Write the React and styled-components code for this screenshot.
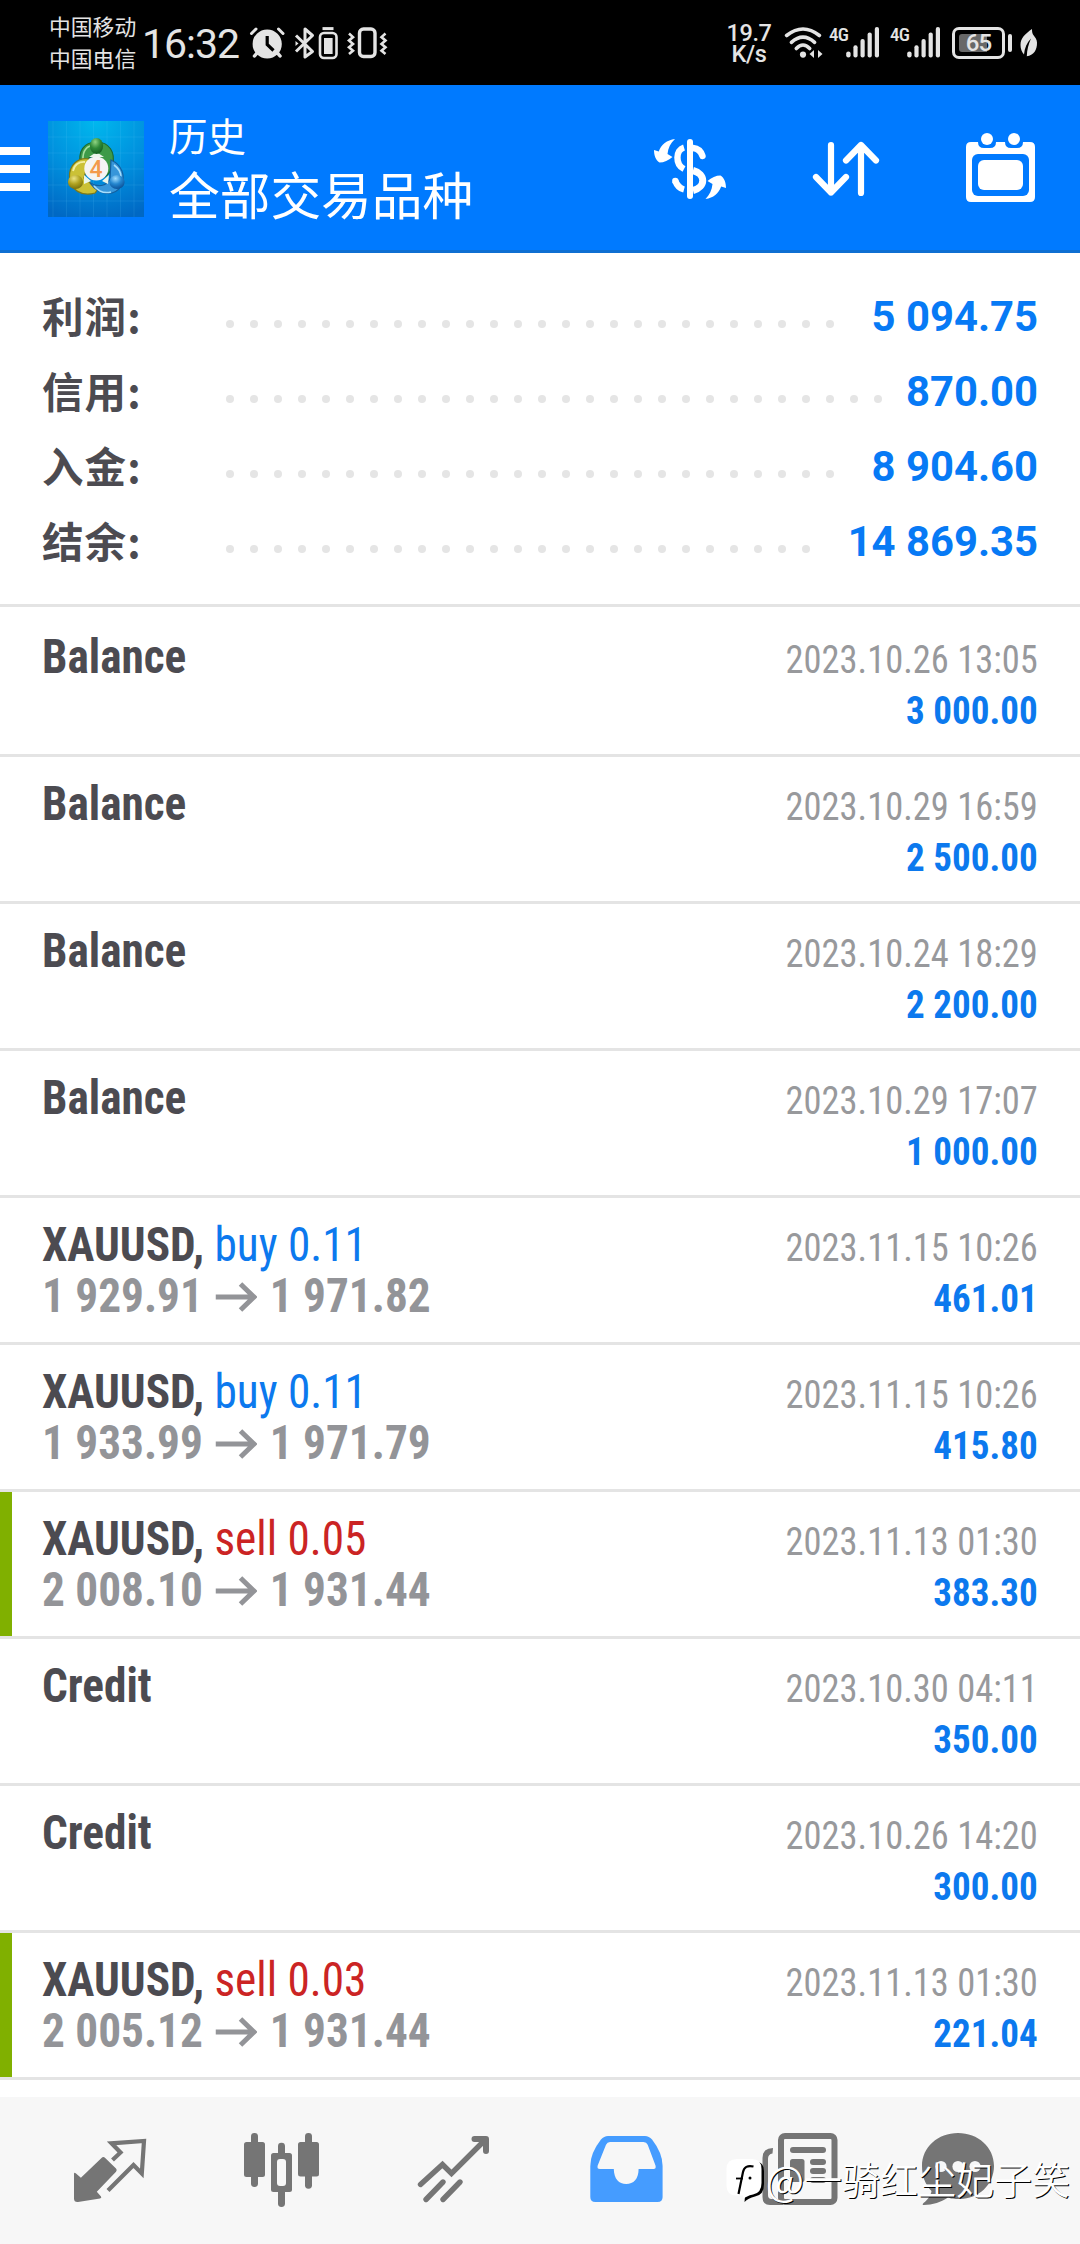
import React from 'react';
import styled, { createGlobalStyle } from 'styled-components';

const summary = [
  { label: '利润:', value: '5 094.75' },
  { label: '信用:', value: '870.00' },
  { label: '入金:', value: '8 904.60' },
  { label: '结余:', value: '14 869.35' },
];

const deals = [
  { name: 'Balance', date: '2023.10.26 13:05', value: '3 000.00' },
  { name: 'Balance', date: '2023.10.29 16:59', value: '2 500.00' },
  { name: 'Balance', date: '2023.10.24 18:29', value: '2 200.00' },
  { name: 'Balance', date: '2023.10.29 17:07', value: '1 000.00' },
  { name: 'XAUUSD,', side: 'buy', lots: '0.11', open: '1 929.91', close: '1 971.82', date: '2023.11.15 10:26', value: '461.01' },
  { name: 'XAUUSD,', side: 'buy', lots: '0.11', open: '1 933.99', close: '1 971.79', date: '2023.11.15 10:26', value: '415.80' },
  { name: 'XAUUSD,', side: 'sell', lots: '0.05', open: '2 008.10', close: '1 931.44', date: '2023.11.13 01:30', value: '383.30', marked: true },
  { name: 'Credit', date: '2023.10.30 04:11', value: '350.00' },
  { name: 'Credit', date: '2023.10.26 14:20', value: '300.00' },
  { name: 'XAUUSD,', side: 'sell', lots: '0.03', open: '2 005.12', close: '1 931.44', date: '2023.11.13 01:30', value: '221.04', marked: true },
];

const dots = Array.from({ length: 32 }, (_, i) => i);

function StatusLeftIcons() {
  return (
    <svg width="140" height="36" viewBox="0 0 140 36" fill="none" stroke="#e4e4e4">
      {/* alarm */}
      <circle cx="19.2" cy="19" r="14.6" fill="#e4e4e4" stroke="none" />
      <path d="M3.5 8.5L8 4M35 8.5L30.5 4" strokeWidth="3" strokeLinecap="round" />
      <path d="M9 28L6.5 31M29.5 28L32 31" strokeWidth="3.5" strokeLinecap="round" />
      <path d="M19.2 11V19.5L25.5 25.5" stroke="#000" strokeWidth="3.2" />
      {/* bluetooth */}
      <path d="M48 10.5L64.5 26.5L57 32V4L64.5 10.5L48 26.5" strokeWidth="3" strokeLinejoin="round" />
      <path d="M47.5 16L50.5 18.5L47.5 21Z" fill="#e4e4e4" stroke="none" />
      {/* device battery */}
      <path d="M74.5 3.6H85.5" strokeWidth="3" />
      <rect x="72" y="8" width="16.5" height="25" rx="4" strokeWidth="2.6" />
      <rect x="76" y="13" width="8.6" height="16" fill="#e4e4e4" stroke="none" />
      {/* vibration */}
      <rect x="111.5" y="4" width="15.5" height="27.5" rx="4" strokeWidth="3.4" />
      <path d="M101 8.5l4 3.6-4 3.4 4 3.4-4 3.4 4 3.4-4 3.4M137.5 8.5l-4 3.6 4 3.4-4 3.4 4 3.4-4 3.4 4 3.4" strokeWidth="2.6" />
    </svg>
  );
}

function WifiIcon() {
  return (
    <svg width="40" height="34" viewBox="0 0 40 34" fill="none" stroke="#e4e4e4" strokeWidth="3.6" strokeLinecap="round">
      <path d="M2.6 9.5Q19 -3.5 35.4 9.5" />
      <path d="M7.4 16.3Q19 6 30.6 16.3" />
      <path d="M12.3 22.5Q19 15.5 25.7 22.5" />
      <circle cx="19" cy="28.6" r="3.1" fill="#e4e4e4" stroke="none" />
      <path d="M25.5 28l4.5-4v8zM38.5 28l-4.5-4v8z" fill="#e4e4e4" stroke="none" />
    </svg>
  );
}

function SignalIcon() {
  return (
    <svg width="34" height="34" viewBox="0 0 34 34" fill="#e4e4e4">
      <rect x="0.2" y="25.4" width="4.4" height="6" rx="2.2" />
      <rect x="7.4" y="19.3" width="4.2" height="12.2" rx="2" />
      <rect x="14.5" y="13" width="4.2" height="18.5" rx="2" />
      <rect x="21.6" y="6.6" width="4.2" height="24.9" rx="2" />
      <rect x="28.8" y="1" width="4.2" height="30.5" rx="2" />
    </svg>
  );
}

function LeafIcon() {
  return (
    <svg width="18" height="28" viewBox="0 0 18 28">
      <path d="M12 0C5 5 0.5 9 0.5 16C0.5 20 1.8 23 4 25.5C4.6 19 7 13.5 11 9.5C8.5 15 7 20.5 6.8 27.2C13.5 26.5 17.2 21 17 13.5C16.9 10 15 8.5 13 5.5C12.2 4 12 2 12 0Z" fill="#e4e4e4" />
    </svg>
  );
}

function AppLogo() {
  return (
    <svg width="96" height="96" viewBox="0 0 96 96">
      <defs>
        <radialGradient id="logoBg" cx="0.5" cy="0" r="1.05">
          <stop offset="0" stopColor="#00b8ee" />
          <stop offset="0.55" stopColor="#008fdd" />
          <stop offset="1" stopColor="#0068c4" />
        </radialGradient>
        <radialGradient id="greenBall" cx="0.4" cy="0.25" r="0.8">
          <stop offset="0" stopColor="#8fd482" />
          <stop offset="0.5" stopColor="#2f8a38" />
          <stop offset="1" stopColor="#125c20" />
        </radialGradient>
        <radialGradient id="yellowBall" cx="0.4" cy="0.25" r="0.8">
          <stop offset="0" stopColor="#ece482" />
          <stop offset="0.5" stopColor="#b0a220" />
          <stop offset="1" stopColor="#736c0c" />
        </radialGradient>
        <radialGradient id="blueBall" cx="0.4" cy="0.25" r="0.8">
          <stop offset="0" stopColor="#9fdcff" />
          <stop offset="0.5" stopColor="#2486cf" />
          <stop offset="1" stopColor="#0a4c92" />
        </radialGradient>
      </defs>
      <rect width="96" height="96" fill="url(#logoBg)" />
      <path
        d="M5 0V96M18.5 0V96M32 0V96M45.5 0V96M59 0V96M72.5 0V96M86 0V96M0 16H96M0 32H96M0 48H96M0 64H96M0 80H96"
        stroke="#6fd0ff"
        strokeOpacity="0.13"
        strokeWidth="1"
      />
      <path d="M32.5 45C29.5 30 36 21 48.5 21C61 21 68 31 64.5 45C63 51 60 54 56 56L53 37L42 36Z" fill="#3d9a48" stroke="#1b6b35" strokeWidth="1.2" />
      <path d="M35 39C34.5 29 39 24.5 47 24" fill="none" stroke="#a6dfa0" strokeWidth="1.6" />
      <path d="M41 38C30 36 21 44 21.5 56C22 69 34 76 47 72L50 68L36 57Z" fill="#cbc136" stroke="#7d7817" strokeWidth="1.2" />
      <path d="M25 50C26 44 31 40.5 37 41" fill="none" stroke="#f3eea0" strokeWidth="1.8" />
      <path d="M63 39C74 44 78 55 73 65C67 75 52 76 42 62C50 66 58 66 62 58Z" fill="#3796da" stroke="#125f9f" strokeWidth="1.2" />
      <path d="M66 44C71.5 48 73 52 73 56M46 65C51 71 57 72.5 63 71" fill="none" stroke="#a7defc" strokeWidth="1.6" />
      <path d="M41 36L48.5 31L56 36ZM36 63L36 54L43 60ZM60 63L61 54L54 60Z" fill="#e9f5ea" />
      <ellipse cx="48.5" cy="25" rx="6.6" ry="8" fill="url(#greenBall)" />
      <ellipse cx="27.5" cy="61" rx="7.6" ry="7" fill="url(#yellowBall)" />
      <ellipse cx="69" cy="61" rx="7.6" ry="7" fill="url(#blueBall)" />
      <circle cx="48.3" cy="47.5" r="12" fill="#f5f4f4" />
      <text x="48" y="56" textAnchor="middle" fontFamily="Roboto, sans-serif" fontWeight="500" fontSize="23" fill="#f39a4c">4</text>
    </svg>
  );
}

function MenuIcon() {
  return (
    <svg width="30" height="44" viewBox="0 0 30 44" fill="#fff">
      <path d="M0 0H30V8H0ZM0 18H30V26H0ZM0 36H30V44H0Z" />
    </svg>
  );
}

function CurrencyIcon() {
  return (
    <svg width="76" height="76" viewBox="0 0 76 76" fill="none" stroke="#fff">
      <path d="M38 11V65" strokeWidth="6" strokeLinecap="round" />
      <path d="M32 16.5C23.5 19 23 33.5 32 38" strokeWidth="6.4" />
      <path d="M41 17C46 17.5 49 20 50.5 25" strokeWidth="6.4" strokeLinecap="round" />
      <path d="M41 39.5C54 43 54 56 41 59.5" strokeWidth="7" />
      <path d="M23.3 50C25 54.5 28 57.5 32 58.5" strokeWidth="6.4" />
      <circle cx="23.3" cy="50" r="3.2" fill="#fff" stroke="none" />
      <path d="M23 8C15 9 9 13.5 6.8 20.5L2 19C2 24 3.5 29 7.5 31.5C12 31.5 16.5 29.5 20.5 26L15.5 23C16 17 18.5 12 23 8Z" fill="#fff" stroke="none" />
      <path d="M53.5 68C61.5 67 66.5 62.5 69.2 55.5L74 57C74 52 72.5 47 68.5 44.5C64 44.5 59.5 46.5 55.5 50L60.5 53C60 59 57.5 64 53.5 68Z" fill="#fff" stroke="none" />
    </svg>
  );
}

function SortIcon() {
  return (
    <svg width="76" height="76" viewBox="0 0 76 76" fill="none" stroke="#fff" strokeWidth="6.2" strokeLinecap="round" strokeLinejoin="round">
      <path d="M23 14V61.5M8 46L23 61.5L38 46" />
      <path d="M53 62V14M38 29.5L53 14L68 29.5" />
    </svg>
  );
}

function CalendarIcon() {
  return (
    <svg width="76" height="76" viewBox="0 0 76 76">
      <path
        fill="#fff"
        d="M8 11H15Q15 17 21 17H27Q33 17 33 11H42Q42 17 48 17H54Q60 17 60 11H67Q72 11 72 16V66Q72 71 67 71H8Q3 71 3 66V16Q3 11 8 11Z"
      />
      <rect x="9" y="23" width="57" height="42" rx="6" fill="#007aff" />
      <rect x="15" y="29" width="45" height="30" rx="6" fill="#fff" />
      <circle cx="24" cy="8" r="6" fill="#fff" />
      <circle cx="51" cy="8" r="6" fill="#fff" />
    </svg>
  );
}

function NavSvg({ children, ...rest }) {
  return (
    <svg width="100" height="100" viewBox="0 0 100 100" {...rest}>
      {children}
    </svg>
  );
}

function QuotesIcon() {
  return (
    <NavSvg>
      <path d="M14 54Q14 52 16 53.5L20.9 57.7L41.5 38Q43.3 36 45.2 38L56 48.5Q57.5 50 56 51.8L36.8 71.7L41 76.5Q42 78 40 78.5L18 82Q14 82.3 14 78.5Z" fill="#757575" />
      <path d="M52.5 40L60.5 32.5L51.5 23.3L84 21L81.8 53.5L73.5 45L48 70.5" fill="none" stroke="#757575" strokeWidth="4.2" />
    </NavSvg>
  );
}

function ChartIcon() {
  return (
    <NavSvg fill="#757575">
      <rect x="19" y="13" width="7" height="54" rx="3.4" />
      <rect x="12" y="22" width="21" height="35" rx="2.5" />
      <rect x="46" y="22.7" width="7" height="64.3" rx="3.4" />
      <rect x="39" y="33" width="21" height="39" rx="2.5" />
      <rect x="45" y="39" width="9" height="27" rx="3" fill="#f7f7f7" />
      <rect x="73" y="13" width="7" height="55.7" rx="3.4" />
      <rect x="66" y="22" width="21" height="34.5" rx="2.5" />
    </NavSvg>
  );
}

function TradeIcon() {
  return (
    <NavSvg fill="none" stroke="#757575" strokeWidth="5.4" strokeLinecap="round">
      <path d="M16.5 64.5L38.5 44.5L47.5 53.5L81 20" />
      <path d="M70.5 19H82V31" strokeWidth="6" strokeLinejoin="round" />
      <path d="M22 79.5L39 62M39 79.5L56 62" />
    </NavSvg>
  );
}

function HistoryIcon() {
  return (
    <NavSvg>
      <path d="M25 19.5Q28 16 32 16H69Q73 16 76 19.5Q86.6 33 86.6 46V77Q86.6 82 81.6 82H19.3Q14.3 82 14.3 77V46Q14.3 33 25 19.5Z" fill="#459cff" />
      <path d="M34 22H67.5Q70.5 22 71.7 24.8L79.5 45.5Q80.4 49 77.4 49H62.6C62.6 59 57.5 64 50.2 64C43 64 38 59 37.8 49H24Q20.7 49 21.7 45.5L30 24.8Q31.2 22 34 22Z" fill="#f7f7f7" />
    </NavSvg>
  );
}

function NewsIcon() {
  return (
    <NavSvg fill="#757575">
      <path d="M25 28Q14.5 28 14.5 38V77Q14.5 85 22 85H35V79H23.5Q20 79 20 75V39Q20 34 24.5 33.5Z" />
      <rect x="33" y="16" width="53.5" height="66" rx="4" fill="none" stroke="#757575" strokeWidth="6" />
      <rect x="42" y="27" width="36" height="6" rx="3" />
      <rect x="42" y="39" width="14.5" height="23" rx="2.5" />
      <rect x="62" y="39" width="16" height="6" rx="3" />
      <rect x="62" y="48" width="16" height="6" rx="3" />
      <rect x="62" y="57" width="16" height="6" rx="3" />
    </NavSvg>
  );
}

function ChatIcon() {
  return (
    <NavSvg>
      <path d="M38 13C58 13 74 27 74 46C74 65 58 79 40 79C34 79 31 78.5 28 77.5C22 82 12 85 4 85Q1.5 85 3.5 83C8 79.5 11 75 11.5 71C5 64.5 2 56 2 46C2 27 18 13 38 13Z" fill="#757575" />
      <circle cx="21" cy="46.5" r="5.6" fill="#f7f7f7" />
      <circle cx="38" cy="46.5" r="5.6" fill="#f7f7f7" />
      <circle cx="55" cy="46.5" r="5.6" fill="#f7f7f7" />
    </NavSvg>
  );
}

function WatermarkLogo() {
  return (
    <svg width="40" height="46" viewBox="0 0 40 46">
      <path d="M14 3H27Q38 3 38 13V26Q38 37 29 38.5Q22 40 18.5 44L19 38Z" fill="#000" />
      <path d="M11 1H26Q35.5 1 35.5 11V25Q35.5 35 27 36.5Q20 38 17.5 41L17 37.5H11Q0.5 37.5 0.5 28V11Q0.5 1 11 1Z" fill="#fff" />
      <path d="M27.5 8.5Q18.5 6.5 17 14L12.5 36" fill="none" stroke="#000" strokeWidth="2.2" />
      <path d="M10 20.5H17" fill="none" stroke="#000" strokeWidth="1.8" />
      <circle cx="24" cy="20" r="1.5" fill="#000" />
    </svg>
  );
}

function DealRow({ deal }) {
  return (
    <Row $marked={deal.marked}>
      <DealInfo>
        <DealTitle>
          {deal.name}
          {deal.side && <Side $side={deal.side}> {deal.side} {deal.lots}</Side>}
        </DealTitle>
        {deal.open && (
          <Prices>
            {deal.open}
            <Arrow viewBox="0 0 42 30" preserveAspectRatio="none">
              <path d="M0 15H38M25 2L38.5 15L25 28" fill="none" stroke="currentColor" strokeWidth="5" />
            </Arrow>
            {deal.close}
          </Prices>
        )}
      </DealInfo>
      <DealResult>
        <DealDate>{deal.date}</DealDate>
        <DealValue>{deal.value}</DealValue>
      </DealResult>
    </Row>
  );
}

function App() {
  return (
    <Screen>
      <GlobalStyle />
      <StatusBar>
        <Carriers>
          <span>中国移动</span>
          <span>中国电信</span>
        </Carriers>
        <Clock>16:32</Clock>
        <StatusLeftIcons />
        <Spacer />
        <Speed>
          <span>19.7</span>
          <span>K/s</span>
        </Speed>
        <WifiIcon />
        <Network $left={5}>4G</Network>
        <SignalIcon />
        <Network $left={10}>4G</Network>
        <SignalIcon />
        <Battery>
          <BatteryLevel />
          <BatteryText>65</BatteryText>
        </Battery>
        <BatteryTip />
        <LeafIcon />
      </StatusBar>

      <Header>
        <MenuIcon />
        <LogoBox>
          <AppLogo />
        </LogoBox>
        <Titles>
          <Title>历史</Title>
          <Subtitle>全部交易品种</Subtitle>
        </Titles>
        <Actions>
          <CurrencyIcon />
          <SortIcon />
          <CalendarIcon />
        </Actions>
      </Header>

      <Summary>
        {summary.map((item) => (
          <SummaryRow key={item.label}>
            <SummaryLabel>{item.label}</SummaryLabel>
            <Leader>
              {dots.map((i) => (
                <Dot key={i} />
              ))}
            </Leader>
            <SummaryValue>{item.value}</SummaryValue>
          </SummaryRow>
        ))}
      </Summary>

      <List>
        {deals.map((deal, index) => (
          <DealRow key={index} deal={deal} />
        ))}
      </List>

      <NavBar>
        <QuotesIcon />
        <ChartIcon />
        <TradeIcon />
        <HistoryIcon />
        <NewsIcon />
        <ChatIcon />
        <Watermark>
          <WatermarkLogo />
          <AtSign>@</AtSign>
          <span>一骑红尘妃子笑</span>
        </Watermark>
      </NavBar>
    </Screen>
  );
}

export default App;

// ====== Styled Components ======
const GlobalStyle = createGlobalStyle`
  * {
    box-sizing: border-box;
  }

  body {
    margin: 0;
    background: #fff;
  }

  svg {
    display: block;
    flex-shrink: 0;
  }
`;

const Screen = styled.div`
  display: flex;
  flex-direction: column;
  width: 1080px;
  height: 2244px;
  overflow: hidden;
  background: #fff;
  font-family: Roboto, 'Noto Sans CJK SC', sans-serif;
`;

const StatusBar = styled.div`
  display: flex;
  align-items: center;
  height: 85px;
  padding: 0 42px 0 49px;
  background: #000;
  color: #e4e4e4;
  flex-shrink: 0;
`;

const Carriers = styled.div`
  display: flex;
  flex-direction: column;
  width: 93px;
  padding-bottom: 1px;
  font-family: 'Noto Sans CJK SC', sans-serif;
  font-size: 21.8px;
  line-height: 32px;
`;

const Clock = styled.div`
  width: 106px;
  padding-top: 3px;
  font-size: 41px;
  line-height: 48px;
  letter-spacing: -1px;
`;

const Spacer = styled.div`
  flex: 1;
`;

const Speed = styled.div`
  display: flex;
  flex-direction: column;
  align-items: center;
  width: 50px;
  margin-right: 10px;
  padding-top: 2px;
  font-size: 23.5px;
  font-weight: 500;
  line-height: 21px;
  letter-spacing: -0.4px;
`;

const Network = styled.div`
  width: 17px;
  height: 32px;
  margin-left: ${(props) => props.$left}px;
  font-family: 'Roboto Condensed', Roboto, sans-serif;
  font-size: 19px;
  font-weight: 500;
  line-height: 16px;
  letter-spacing: -0.8px;
`;

const Battery = styled.div`
  position: relative;
  display: flex;
  width: 53px;
  height: 32px;
  margin-left: 11px;
  padding: 4px;
  border: 3px solid #e4e4e4;
  border-radius: 7px;
`;

const BatteryLevel = styled.div`
  width: 28px;
  background: #686868;
  border-radius: 3px 0 0 3px;
`;

const BatteryText = styled.div`
  position: absolute;
  inset: 0;
  font-size: 24px;
  font-weight: 500;
  line-height: 27px;
  letter-spacing: -1px;
  text-align: center;
`;

const BatteryTip = styled.div`
  width: 4px;
  height: 18px;
  margin: 0 8px 0 3px;
  background: #e4e4e4;
  border-radius: 2px;
`;

const Header = styled.div`
  display: flex;
  align-items: center;
  height: 168px;
  padding-right: 41px;
  background: #007aff;
  box-shadow: inset 0 -3px 0 #0f6fd2;
  color: #fff;
  flex-shrink: 0;
`;

const LogoBox = styled.div`
  margin-left: 18px;
`;

const Titles = styled.div`
  display: flex;
  flex-direction: column;
  flex: 1;
  margin-left: 25px;
  padding-bottom: 7px;
  font-family: 'Noto Sans CJK SC', sans-serif;
`;

const Title = styled.div`
  font-size: 38.5px;
  line-height: 56px;
`;

const Subtitle = styled.div`
  font-size: 50.7px;
  line-height: 63px;
`;

const Actions = styled.div`
  display: flex;
  gap: 79.5px;
`;

const Summary = styled.div`
  height: 354px;
  padding: 26px 42px 0;
  border-bottom: 3px solid #e4e4e4;
  flex-shrink: 0;
`;

const SummaryRow = styled.div`
  display: flex;
  align-items: center;
  height: 75px;
`;

const SummaryLabel = styled.div`
  width: 184px;
  padding-bottom: 4px;
  color: #4c4b51;
  font-family: 'Noto Sans CJK SC', sans-serif;
  font-size: 41.5px;
  font-weight: 700;
  line-height: 60px;
  letter-spacing: 1.1px;
  white-space: nowrap;
`;

const Leader = styled.div`
  display: flex;
  flex: 1;
  flex-wrap: wrap;
  height: 8px;
  margin-top: 15px;
  overflow: hidden;
`;

const Dot = styled.span`
  width: 8px;
  height: 8px;
  margin-right: 16px;
  border-radius: 50%;
  background: #e5e5e5;
`;

const SummaryValue = styled.div`
  margin-left: 2px;
  color: #077af5;
  font-size: 41.8px;
  font-weight: 700;
  line-height: 50px;
`;

const List = styled.div`
  flex: 1;
  padding-top: 3px;
`;

const Row = styled.div`
  display: flex;
  justify-content: space-between;
  height: 147px;
  padding-right: 42px;
  padding-left: 42px;
  border-bottom: 3px solid #e4e4e4;
  box-shadow: ${(props) => (props.$marked ? 'inset 12px 0 0 #80b000' : 'none')};
  font-family: 'Roboto Condensed', Roboto, sans-serif;
  line-height: 51px;
  white-space: nowrap;
`;

const DealInfo = styled.div`
  padding-top: 21px;
  font-size: 48px;
  font-weight: 700;
  transform: scaleX(0.943);
  transform-origin: left;
`;

const DealTitle = styled.div`
  color: #4c4b51;
`;

const Side = styled.span`
  color: ${(props) => (props.$side === 'buy' ? '#0c79ee' : '#cb2424')};
  font-weight: 400;
`;

const Prices = styled.div`
  display: flex;
  align-items: center;
  color: #939498;
`;

const Arrow = styled.svg`
  width: 44.5px;
  height: 30px;
  margin: 2px 13.5px 0 13px;
`;

const DealResult = styled.div`
  padding-top: 25px;
  font-size: 39px;
  text-align: right;
`;

const DealDate = styled.div`
  color: #98999c;
  transform: scaleX(0.935);
  transform-origin: right;
`;

const DealValue = styled.div`
  color: #0c79ee;
  font-weight: 700;
  transform: scaleX(0.95);
  transform-origin: right;
`;

const NavBar = styled.div`
  position: relative;
  display: flex;
  gap: 72px;
  height: 147px;
  padding: 23px 60px 0;
  background: #f7f7f7;
  flex-shrink: 0;
`;

const Watermark = styled.div`
  position: absolute;
  right: 10px;
  bottom: 40px;
  display: flex;
  align-items: center;
  color: #fff;
  font-family: 'Noto Sans CJK SC', sans-serif;
  font-size: 38px;
  font-weight: 350;
  line-height: 46px;
  text-shadow: 1px 1px 0 #000;
  white-space: nowrap;

  svg {
    margin-top: 6px;
  }
`;

const AtSign = styled.span`
  font-size: 41px;
`;
